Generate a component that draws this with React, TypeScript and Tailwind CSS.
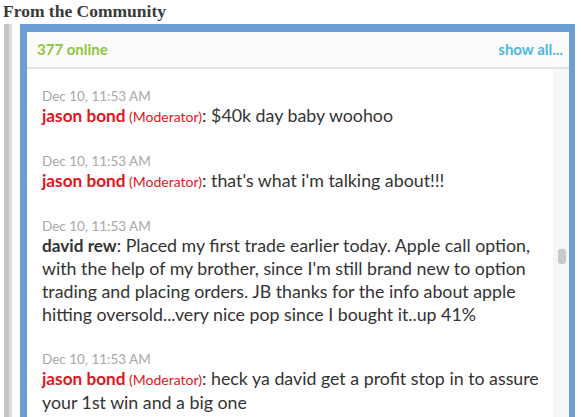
import React from 'react';

type Msg = {
  id: number;
  time: string;
  name: string;
  mod: boolean;
  text: string;
};

const messages: Msg[] = [
  { id: 1, time: 'Dec 10, 11:53 AM', name: 'jason bond', mod: true, text: '$40k day baby woohoo' },
  { id: 2, time: 'Dec 10, 11:53 AM', name: 'jason bond', mod: true, text: "that's what i'm talking about!!!" },
  {
    id: 3,
    time: 'Dec 10, 11:53 AM',
    name: 'david rew',
    mod: false,
    text: "Placed my first trade earlier today. Apple call option, with the help of my brother, since I'm still brand new to option trading and placing orders. JB thanks for the info about apple hitting oversold...very nice pop since I bought it..up 41%",
  },
  {
    id: 4,
    time: 'Dec 10, 11:53 AM',
    name: 'jason bond',
    mod: true,
    text: 'heck ya david get a profit stop in to assure your 1st win and a big one',
  },
];

const App: React.FC = () => {
  return (
    <div className="w-[581px] h-[417px] overflow-hidden bg-white flex flex-col">
      <h2 className="pl-[3px] pt-[1px] h-[24px] text-[17.5px] leading-[20px] font-bold text-[#3a3a3a] font-['Liberation_Serif',serif]">
        From the Community
      </h2>

      <div className="flex flex-1 min-h-0">
        {/* side rail */}
        <div className="ml-[4px] flex">
          <div className="w-[5px] bg-[#c4c4c4]" />
          <div className="w-[3px] bg-[#dedede]" />
        </div>

        {/* chat box */}
        <div className="ml-[8px] w-[555px] flex flex-col border-t-[8px] border-l-[7px] border-r-[6px] border-[#6b9fd4] font-['Lato',sans-serif]">
          <div className="h-[37px] shrink-0 flex items-center justify-between pl-[10px] pr-[6px] bg-[#fbfbfb] border-b-2 border-[#e4e4e4]">
            <span className="text-[15px] font-bold text-[#8dc63f]">377 online</span>
            <span className="text-[15px] font-bold text-[#4db6e2]">show all...</span>
          </div>

          <div className="flex flex-1 min-h-0">
            <div className="flex-1 pl-[15px] pr-[5px] pt-[19px] flex flex-col gap-[25px]">
              {messages.map((m) => (
                <div key={m.id}>
                  <div className="text-[13.5px] leading-[16px] text-[#a8a8a8]">{m.time}</div>
                  <p className="text-[17.8px] leading-[23px] text-[#333]">
                    <span className={m.mod ? 'font-bold text-[17.2px] text-[#e3141c]' : 'font-bold text-[17.2px] text-[#333]'}>
                      {m.name}
                    </span>
                    {m.mod && <span className="text-[14px] text-[#e3141c]"> (Moderator)</span>}
                    : {m.text}
                  </p>
                </div>
              ))}
            </div>

            {/* scrollbar */}
            <div className="w-[16px] bg-[#f6f6f6] relative">
              <div className="absolute left-[5px] top-[180px] w-[8px] h-[15px] rounded-[3px] bg-[#c9c9c9]" />
            </div>
          </div>
        </div>
      </div>
    </div>
  );
};

export default App;
